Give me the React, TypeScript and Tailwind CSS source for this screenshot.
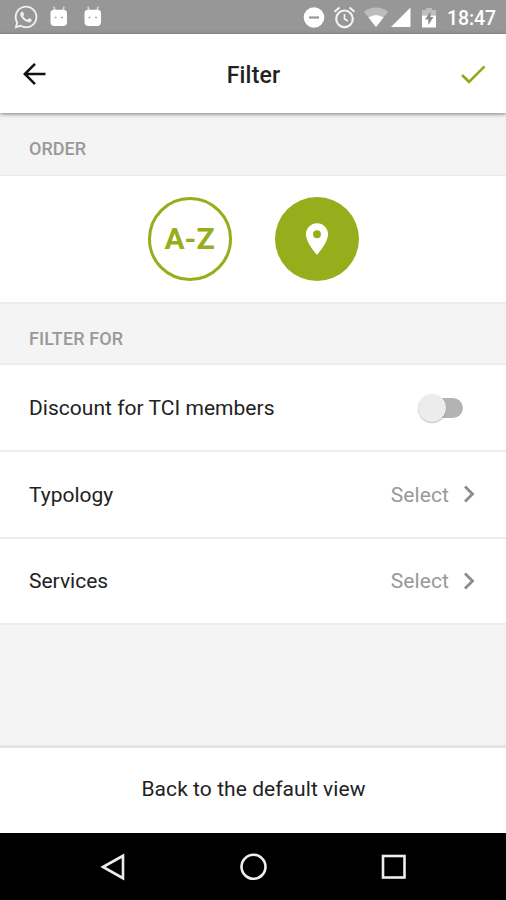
import { useState } from "react";
import { FaWhatsapp } from "react-icons/fa";
import { MdPlace } from "react-icons/md";

function Bugdroid() {
    return (
        <svg width="18" height="22" viewBox="0 0 18 22" fill="none">
            <path d="M4 0.800L5 5M14 0.800L13 5" stroke="#d8d8d8" strokeWidth="1.6" />
            <path d="M0.500 7.500Q0.500 3.800 4 3.800H13.500Q17 3.800 17 7.500V16Q17 20 13 20H4.500Q0.500 20 0.500 16Z" fill="#fff" />
            <path d="M4.500 11.500H6.500M11 11.500H13" stroke="#aaa" strokeWidth="1.400" />
        </svg>
    );
}

function StatusBar() {
    return (
        <div className="flex h-[34px] items-center bg-[#979797] pl-[13px] pr-[9px] text-white">
            <FaWhatsapp className="size-[26px] text-[#f0f0f0]" />
            <div className="ml-[11px]">
                <Bugdroid />
            </div>
            <div className="ml-4">
                <Bugdroid />
            </div>

            <svg className="ml-auto" width="22" height="22" viewBox="0 0 22 22">
                <circle cx="11" cy="11.500" r="10.300" fill="#fff" />
                <path d="M6 11.500H16" stroke="#979797" strokeWidth="2.200" />
            </svg>
            <svg className="ml-2" width="24" height="24" viewBox="0 0 24 24" fill="none" stroke="#f4f4f4">
                <circle cx="11.500" cy="13.800" r="8.300" strokeWidth="2.200" />
                <path d="M11.500 9V14L15 16" strokeWidth="1.700" />
                <path d="M1.500 6.800L6.500 2.600M21.500 6.800L16.500 2.600" strokeWidth="2" />
            </svg>
            <svg className="ml-[6px]" width="26" height="22" viewBox="0 0 26 22">
                <path d="M13 21L0.800 5.700Q13 -2.700 25.200 5.700Z" fill="#bdbdbd" />
                <path d="M13 21L5.500 11.500Q13 6.500 20.500 11.500Z" fill="#fff" />
            </svg>
            <svg className="ml-[2px]" width="20" height="22" viewBox="0 0 20 22">
                <path d="M0 21L19.500 1.500V21Z" fill="#fff" />
            </svg>
            <svg className="ml-[11px]" width="14" height="22" viewBox="0 0 14 22">
                <path d="M0 9.500V4H4V2H10V4H14V9.500Z" fill="#bdbdbd" />
                <path d="M0 9.500H14V21.500H0Z" fill="#fff" />
                <path d="M8.500 5.500L3 13.500H6.300V19L11.500 11H8.500Z" fill="#8a8a8a" />
            </svg>
            <span className="ml-[11px] w-[50px] pt-[3px] text-[19.5px] leading-none font-medium tracking-[-0.1px] whitespace-nowrap">18:47</span>
        </div>
    );
}

function Header() {
    return (
        <header className="relative flex h-[79px] items-center justify-between bg-white px-5 shadow-[0_1px_4px_rgba(0,0,0,0.5)]">
            <svg width="28" height="28" viewBox="0 0 28 28" fill="none" stroke="#111" strokeWidth="2.500">
                <path d="M25.500 14H4.500M15 3.800L4.800 14L15 24.200" />
            </svg>
            <h1 className="pt-[5px] pl-px text-[23px] font-medium tracking-[0.2px] text-[#222]">Filter</h1>
            <svg width="28" height="28" viewBox="0 0 28 28" fill="none" stroke="#8fab1a" strokeWidth="2.600">
                <path d="M4 15L11 21.800L26.500 6.300" />
            </svg>
        </header>
    );
}

function Chevron() {
    return (
        <svg width="14" height="20" viewBox="0 0 14 20" fill="none" stroke="#8c8c8c" strokeWidth="2.800">
            <path d="M3 2.500L10.500 10L3 17.500" />
        </svg>
    );
}

function SelectRow({ label }: { label: string }) {
    return (
        <div className="flex h-[86.500px] items-center border-b-2 border-[#ededed] bg-white pr-[30px] pl-[29px]">
            <span className="pt-[2px] text-[21px] text-[#222]">{label}</span>
            <span className="ml-auto pt-[2px] text-[21px] tracking-[0.1px] text-[#999]">Select</span>
            <div className="ml-[13px]">
                <Chevron />
            </div>
        </div>
    );
}

function App() {
    const [discount, setDiscount] = useState(false);

    return (
        <div className="flex h-[900px] w-[506px] flex-col overflow-hidden bg-[#f4f4f4] font-[Roboto,sans-serif]">
            <StatusBar />
            <Header />

            <div className="flex h-[63px] items-center border-b border-[#e8e8e8] pt-[9px] pl-[29px]">
                <span className="text-[18px] font-medium text-[#999]">ORDER</span>
            </div>
            <div className="flex h-[126px] items-center justify-center gap-[43px] bg-white">
                <button className="flex size-[84px] items-center justify-center rounded-full border-[3px] border-[#97ae1c] pb-[2px] text-[30px] font-bold text-[#97ae1c]">
                    A-Z
                </button>
                <button className="flex size-[84px] items-center justify-center rounded-full bg-[#97ae1c] pb-px text-white">
                    <MdPlace className="size-[38px]" />
                </button>
            </div>

            <div className="flex h-[63px] items-center border-y-2 border-[#ececec] pt-[9px] pl-[29px]">
                <span className="text-[18px] font-medium tracking-[0.1px] text-[#999]">FILTER FOR</span>
            </div>
            <div className="flex h-[87px] items-center justify-between border-b-2 border-[#ededed] bg-white pr-[43px] pl-[29px]">
                <span className="pt-[2px] text-[21px] tracking-[0.03px] text-[#222]">Discount for TCI members</span>
                <button
                    className="flex h-[29px] w-[45px] items-center"
                    role="switch"
                    aria-checked={discount}
                    aria-label="Discount for TCI members"
                    onClick={() => setDiscount(!discount)}
                >
                    <span className="flex h-[20px] w-full items-center rounded-full bg-[#b3b3b3]">
                        <span className={discount ? "ml-auto size-[28px] rounded-full bg-[#97ae1c]" : "size-[28px] shrink-0 rounded-full bg-[#ececec] shadow-[0_1px_1px_rgba(0,0,0,0.25)]"} />
                    </span>
                </button>
            </div>
            <SelectRow label="Typology" />
            <SelectRow label="Services" />

            <div className="mt-auto flex h-[88px] items-center justify-center border-t-[3px] border-[#e4e4e4] bg-white pb-[2px] pl-px">
                <span className="text-[21px] tracking-[0.06px] text-[#222]">Back to the default view</span>
            </div>
            <div className="flex h-[67px] items-center justify-between bg-black px-[99px]">
                <svg width="28" height="28" viewBox="0 0 28 28" fill="none" stroke="#eee" strokeWidth="2.600">
                    <path d="M4 14L24 2.800V25.200Z" />
                </svg>
                <svg width="28" height="28" viewBox="0 0 28 28" fill="none" stroke="#eee" strokeWidth="2.600">
                    <circle cx="14.500" cy="13.800" r="12" />
                </svg>
                <svg width="28" height="28" viewBox="0 0 28 28" fill="none" stroke="#eee" strokeWidth="2.600">
                    <rect x="4" y="3" width="21.500" height="21.500" />
                </svg>
            </div>
        </div>
    );
}

export default App;
